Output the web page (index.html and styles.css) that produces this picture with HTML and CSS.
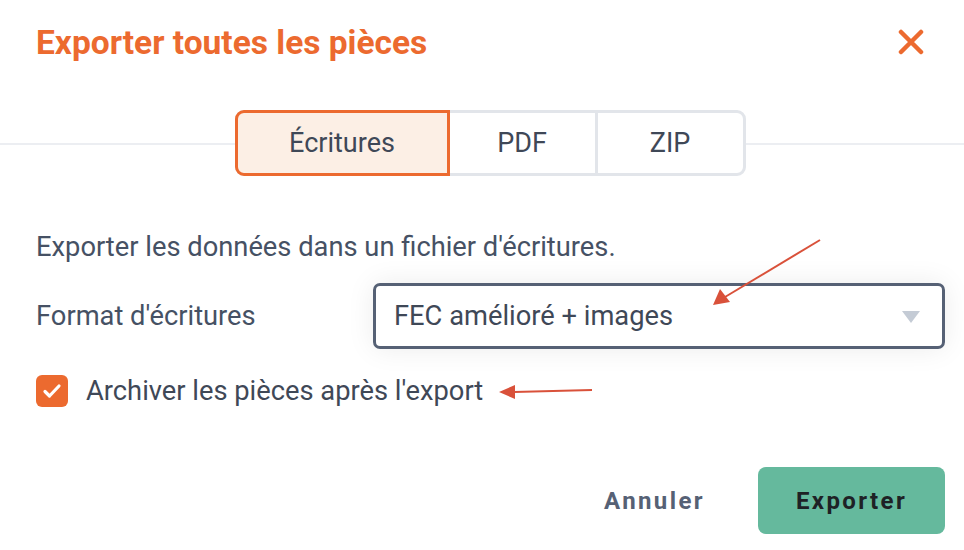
FILE: index.html
```html
<!DOCTYPE html>
<html lang="fr">
<head>
    <meta charset="UTF-8">
    <title>Exporter toutes les pièces</title>
    <link rel="stylesheet" href="styles.css">
</head>
<body>
<div class="modal">
    <div class="modal-header">
        <h1 class="modal-title">Exporter toutes les pièces</h1>
        <button class="close-btn" aria-label="Fermer">
            <svg width="26" height="26" viewBox="0 0 26 26">
                <path d="M3 3L23 23M23 3L3 23" stroke="#ec6a2f" stroke-width="4.5" stroke-linecap="round"/>
            </svg>
        </button>
    </div>

    <div class="tabs-row">
        <div class="tabs">
            <div class="tab active">Écritures</div>
            <div class="tab">PDF</div>
            <div class="tab">ZIP</div>
        </div>
    </div>

    <div class="modal-body">
        <p class="desc">Exporter les données dans un fichier d'écritures.</p>
        <div class="field">
            <label class="field-label">Format d'écritures</label>
            <div class="select">
                <span>FEC amélioré + images</span>
                <svg class="caret" width="18" height="12" viewBox="0 0 18 12">
                    <path d="M0 0H18L9 12Z" fill="#c4cbd5"/>
                </svg>
            </div>
        </div>
        <label class="check">
            <span class="check-box">
                <svg width="20" height="16" viewBox="0 0 20 16">
                    <path d="M3 8.5L7.5 13L17 3" stroke="#fff" stroke-width="3.2" fill="none" stroke-linecap="round" stroke-linejoin="round"/>
                </svg>
            </span>
            Archiver les pièces après l'export
        </label>
    </div>

    <div class="modal-footer">
        <button class="btn-cancel">Annuler</button>
        <button class="btn-export">Exporter</button>
    </div>

    <!-- annotations -->
    <svg class="arrows" width="964" height="550" viewBox="0 0 964 550">
        <g stroke="#d9513a" stroke-width="2" fill="#d9513a">
            <line x1="820" y1="240" x2="725" y2="297"/>
            <path d="M713 305L720 289L730 302Z" stroke="none"/>
            <line x1="592" y1="390" x2="514" y2="392"/>
            <path d="M499 392L515 385L515 399Z" stroke="none"/>
        </g>
    </svg>
</div>
</body>
</html>
```

FILE: styles.css
```css
body{
    margin: 0;
    background: #fff;
    font-family: Roboto, "Noto Sans", sans-serif;
    color: #465164;
}
.modal{
    width: 964px;
    height: 550px;
    position: relative;
    overflow: hidden;
}
.modal-header{
    display: flex;
    justify-content: space-between;
    align-items: center;
    padding: 22px 40px 0 36px;
    height: 40px;
}
.modal-title{
    margin: 0;
    font-size: 33.5px;
    font-weight: 700;
    color: #ec6a2f;
}
.close-btn{
    border: 0;
    background: none;
    padding: 0;
    display: flex;
}
.tabs-row{
    margin-top: 48px;
    position: relative;
    display: flex;
    justify-content: center;
    padding-left: 16px;
}
.tabs-row:before{
    content: "";
    position: absolute;
    left: 0;
    right: 0;
    top: 33px;
    border-top: 2px solid #eceef2;
}
.tabs{
    display: flex;
    position: relative;
    border: 3px solid #e2e5ea;
    border-radius: 9px;
    background: #fff;
}
.tab{
    height: 60px;
    line-height: 60px;
    text-align: center;
    font-size: 27px;
    color: #3f4857;
    width: 145px;
}
.tab + .tab{
    border-left: 3px solid #e2e5ea;
}
.tab.active{
    width: 209px;
    margin: -3px 0 -3px -3px;
    border: 3px solid #ec6a2f;
    border-radius: 9px 0 0 9px;
    background: #fcefe5;
}
.tab.active + .tab{
    border-left: 0;
}
.modal-body{
    padding: 0 19px 0 36px;
}
.desc{
    margin: 55px 0 0;
    font-size: 27.3px;
    line-height: 32px;
}
.field{
    display: flex;
    align-items: center;
    margin-top: 20px;
}
.field-label{
    width: 337px;
    font-size: 27.3px;
}
.select{
    flex: 1;
    height: 60px;
    border: 3px solid #566175;
    border-radius: 7px;
    display: flex;
    align-items: center;
    justify-content: space-between;
    padding: 0 22px 0 18px;
    font-size: 27.3px;
    color: #3f4857;
    box-shadow: 0 0 28px rgba(0,0,0,0.08);
}
.caret{
    margin-top: 2px;
}
.check{
    display: flex;
    align-items: center;
    margin-top: 26px;
    font-size: 27.3px;
    color: #3f4857;
}
.check-box{
    width: 32px;
    height: 32px;
    border-radius: 6px;
    background: #ec6a2f;
    display: flex;
    align-items: center;
    justify-content: center;
    margin-right: 18px;
}
.modal-footer{
    display: flex;
    justify-content: flex-end;
    align-items: center;
    padding: 60px 19px 0 0;
    gap: 53px;
}
.btn-cancel{
    border: 0;
    background: none;
    font-family: Roboto, sans-serif;
    font-size: 24px;
    font-weight: 700;
    color: #566175;
    letter-spacing: 2.4px;
    padding: 0;
}
.btn-export{
    border: 0;
    width: 187px;
    height: 67px;
    border-radius: 8px;
    background: #65b99d;
    font-family: Roboto, sans-serif;
    font-size: 24px;
    font-weight: 700;
    color: #1e2125;
    letter-spacing: 2.4px;
}
.arrows{
    position: absolute;
    left: 0;
    top: 0;
    pointer-events: none;
}
```
